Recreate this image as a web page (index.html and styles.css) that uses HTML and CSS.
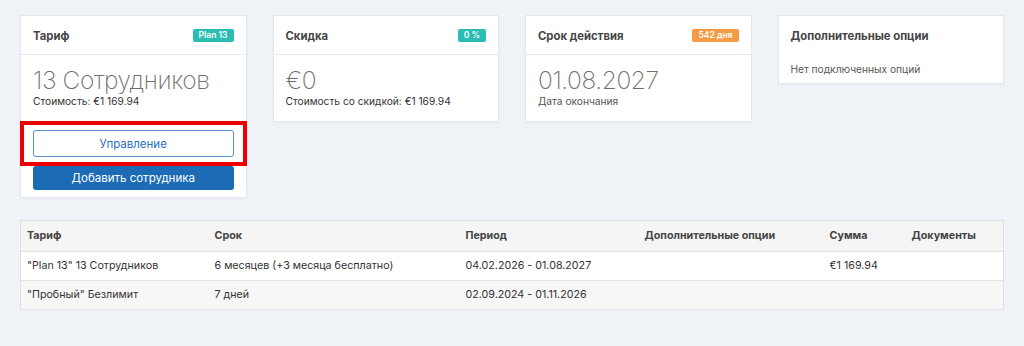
FILE: index.html
```html
<!DOCTYPE html>
<html lang="ru">
<head>
    <meta charset="UTF-8">
    <title>Тариф</title>
    <link rel="stylesheet" href="styles.css">
</head>
<body>
    <div class="page">
        <div class="cards">
            <!-- Тариф -->
            <div class="card">
                <div class="card-header">
                    <span class="card-title">Тариф</span>
                    <span class="badge badge-teal">Plan 13</span>
                </div>
                <div class="card-body card-body-tight">
                    <div class="big-value">13 Сотрудников</div>
                    <div class="small-value">Стоимость: €1 169.94</div>
                    <div class="highlight">
                        <button class="btn btn-outline">Управление</button>
                    </div>
                    <button class="btn btn-primary">Добавить сотрудника</button>
                </div>
            </div>
            <!-- Скидка -->
            <div class="card">
                <div class="card-header">
                    <span class="card-title">Скидка</span>
                    <span class="badge badge-teal">0 %</span>
                </div>
                <div class="card-body">
                    <div class="big-value">€0</div>
                    <div class="small-value">Стоимость со скидкой: €1 169.94</div>
                </div>
            </div>
            <!-- Срок действия -->
            <div class="card">
                <div class="card-header">
                    <span class="card-title">Срок действия</span>
                    <span class="badge badge-orange">542 дня</span>
                </div>
                <div class="card-body">
                    <div class="big-value">01.08.2027</div>
                    <div class="small-value muted">Дата окончания</div>
                </div>
            </div>
            <!-- Дополнительные опции -->
            <div class="card">
                <div class="card-header card-header-plain">
                    <span class="card-title">Дополнительные опции</span>
                </div>
                <div class="card-body card-body-plain">
                    <div class="small-value muted">Нет подключенных опций</div>
                </div>
            </div>
        </div>

        <table class="history">
            <colgroup>
                <col class="col-plan">
                <col class="col-term">
                <col class="col-period">
                <col class="col-options">
                <col class="col-sum">
                <col class="col-docs">
            </colgroup>
            <thead>
                <tr>
                    <th>Тариф</th>
                    <th>Срок</th>
                    <th>Период</th>
                    <th>Дополнительные опции</th>
                    <th>Сумма</th>
                    <th>Документы</th>
                </tr>
            </thead>
            <tbody>
                <tr>
                    <td>"Plan 13" 13 Сотрудников</td>
                    <td>6 месяцев (+3 месяца бесплатно)</td>
                    <td>04.02.2026 - 01.08.2027</td>
                    <td></td>
                    <td>€1 169.94</td>
                    <td></td>
                </tr>
                <tr>
                    <td>"Пробный" Безлимит</td>
                    <td>7 дней</td>
                    <td>02.09.2024 - 01.11.2026</td>
                    <td></td>
                    <td></td>
                    <td></td>
                </tr>
            </tbody>
        </table>
    </div>
</body>
</html>
```

FILE: styles.css
```css
/* базовые стили */
body {
    margin: 0;
    background-color: #eff2f7;
    color: #333;
    font-family: Inter, "Noto Sans", "Noto Sans CJK SC", sans-serif;
    font-size: 11px;
}

.page {
    padding: 15px 20px 0 20px;
}

/* карточки */
.cards {
    display: grid;
    grid-template-columns: repeat(4, 1fr);
    column-gap: 26px;
    align-items: start;
}

.card {
    background-color: #fff;
    border: 1px solid #e4e7ec;
    box-shadow: 0 1px 2px rgba(0, 0, 0, 0.04);
}

.card-header {
    display: flex;
    align-items: center;
    justify-content: space-between;
    height: 37px;
    padding: 1px 12px 0 12px;
    border-bottom: 1px solid #e6e9ee;
}

.card-header-plain {
    border-bottom: none;
}

.card-title {
    font-size: 11.3px;
    font-weight: 700;
    color: #454545;
}

.badge {
    display: inline-block;
    height: 13px;
    line-height: 13px;
    padding: 0 6px;
    border-radius: 2px;
    color: #fff;
    font-size: 8.5px;
    font-weight: 600;
}

.badge-teal {
    background-color: #2abdb4;
}

.badge-orange {
    background-color: #f59a45;
}

.card-body {
    padding: 10px 12px 13px 12px;
}

.card-body-tight {
    padding-bottom: 7px;
}

.card-body-plain {
    padding: 9px 12px 7px 12px;
}

.big-value {
    font-size: 24.5px;
    font-weight: 200;
    line-height: 30px;
    letter-spacing: -0.4px;
    color: #6f6f6f;
}

.small-value {
    font-size: 10.2px;
    line-height: 13px;
    color: #333;
}

.muted {
    color: #555;
}

/* кнопки */
.btn {
    display: block;
    width: 100%;
    height: 24px;
    border-radius: 3px;
    font-family: inherit;
    font-size: 11.5px;
    cursor: pointer;
}

.btn-outline {
    height: 27px;
    background-color: #fff;
    border: 1px solid #5c8fd0;
    color: #2c70bf;
}

.btn-primary {
    background-color: #1c6bb5;
    border: none;
    color: #fff;
}

/* красная рамка вокруг кнопки */
.highlight {
    margin: 13px -13px 0 -13px;
    padding: 5px 9px;
    border: 4px solid #ee0000;
}

/* таблица */
.history {
    width: 100%;
    margin-top: 22px;
    border-collapse: collapse;
    table-layout: fixed;
    background-color: #fff;
    border: 1px solid #e0e0e0;
    font-size: 10.7px;
}

.col-plan { width: 188px; }
.col-term { width: 251px; }
.col-period { width: 179px; }
.col-options { width: 185px; }
.col-sum { width: 82px; }

.history th,
.history td {
    text-align: left;
    padding: 0 6px;
    line-height: 14px;
}

.history th {
    height: 30px;
    background-color: #f5f5f5;
    font-weight: 700;
    color: #444;
    border-bottom: 1px solid #e3e3e3;
}

.history td {
    height: 28px;
    color: #333;
    border-bottom: 1px solid #e6e6e6;
}

.history tbody tr:nth-child(even) td {
    background-color: #f7f7f7;
}
```
